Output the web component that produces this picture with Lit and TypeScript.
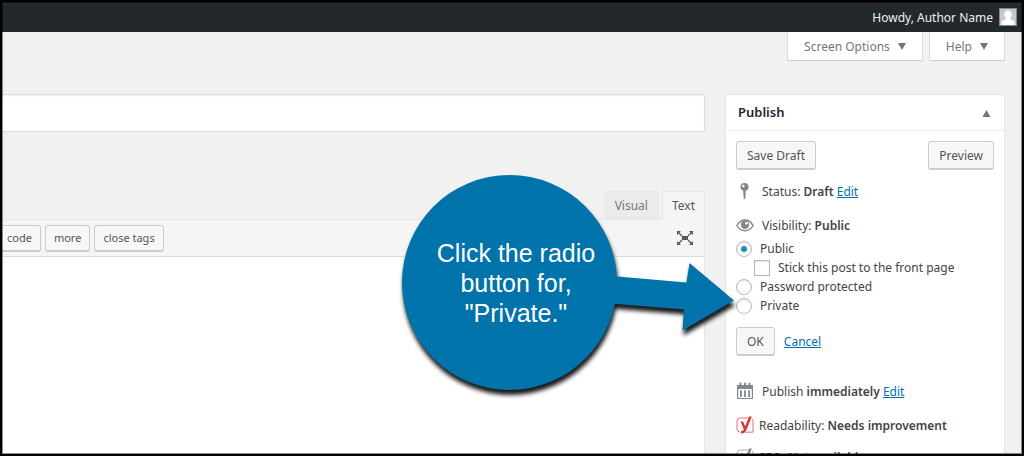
import { LitElement, html, css, svg } from "lit";
import { customElement, state } from "lit/decorators.js";

const YOAST = svg`
  <path d="M12 2H4.500Q1 2 1 5.500v7Q1 16 4 16.200M9 16.200h8V5.500Q17 4 16 3" fill="none" stroke="currentColor" stroke-width="1" opacity=".7"/>
  <path d="M4.500 5.500h2.600l2.100 5L13 .5h2.800L10.600 13.500C9.700 15.900 8.400 17.400 5 17.500v-2.200c1.700-.2 2.500-.9 2.800-2.100z" fill="currentColor"/>`;

@customElement("publish-box")
export class PublishBox extends LitElement {
  static styles = css`
    :host {
      display: block;
      background: #fff;
      border: 1px solid #e5e5e5;
      color: #444;
    }
    .head {
      display: flex;
      align-items: center;
      justify-content: space-between;
      height: 35px;
      padding: 0 13px 0 12px;
      border-bottom: 1px solid #eee;
    }
    .title {
      margin: 0;
      font-size: 13px;
      font-weight: 600;
      color: #23282d;
    }
    .toggle {
      display: flex;
      padding: 2px 0 0;
      border: 0;
      background: none;
    }
    .body {
      padding: 10px 10px 0;
    }
    .actions {
      display: flex;
      justify-content: space-between;
      margin-bottom: 7px;
    }
    .btn {
      height: 29px;
      padding: 0 10px;
      border: 1px solid #ccc;
      border-bottom-width: 2px;
      border-radius: 3px;
      background: #f7f7f7;
      color: #555;
      font: inherit;
    }
    .row {
      display: flex;
      align-items: center;
      gap: 8px;
      height: 28px;
      margin-bottom: 6px;
      white-space: nowrap;
    }
    .tight {
      gap: 5px;
      margin-bottom: 4px;
    }
    .icon {
      flex: none;
      width: 18px;
      height: 18px;
      color: #82878c;
    }
    .red {
      color: #dc3232;
    }
    b {
      font-weight: 600;
    }
    a {
      color: #0073aa;
    }
    .open {
      margin-bottom: 0;
    }
    .choices {
      margin: 0 0 12px;
      padding: 0;
      border: 0;
    }
    .choice {
      display: flex;
      align-items: center;
      gap: 8px;
      height: 19px;
    }
    .nested {
      padding-left: 18px;
    }
    .mark {
      appearance: none;
      display: grid;
      place-items: center;
      width: 16px;
      height: 16px;
      margin: 0;
      border: 1px solid #b4b9be;
      background: #fff;
      box-shadow: inset 0 1px 2px rgba(0, 0, 0, 0.1);
    }
    .round {
      border-radius: 50%;
    }
    .round:checked::before {
      content: "";
      width: 6px;
      height: 6px;
      border-radius: 50%;
      background: #1e8cbe;
    }
    .square:checked::before {
      content: "";
      width: 8px;
      height: 8px;
      background: #1e8cbe;
    }
    .confirm {
      display: flex;
      align-items: center;
      gap: 9px;
      margin-bottom: 21px;
    }
  `;

  @state() visibility = "Public";

  private choice(name: string) {
    return html`<label class="choice">
      <input
        class="mark round"
        type="radio"
        name="visibility"
        .checked=${this.visibility === name}
        @change=${() => (this.visibility = name)}
      />${name}
    </label>`;
  }

  render() {
    return html`
      <div class="head">
        <h2 class="title">Publish</h2>
        <button class="toggle" aria-label="Toggle panel">
          <svg width="9" height="7"><path d="M4.500 0 8.500 7H.5z" fill="#72777c" /></svg>
        </button>
      </div>
      <div class="body">
        <div class="actions">
          <button class="btn">Save Draft</button>
          <button class="btn">Preview</button>
        </div>
        <div class="row">
          <svg class="icon" viewBox="0 0 18 18">
            <path fill="currentColor" d="M8.500 1a4 4 0 0 1 1.300 7.800L9.300 17H7.700L7.200 8.800A4 4 0 0 1 8.500 1z" />
            <circle cx="7.300" cy="4" r="1.300" fill="#fff" />
          </svg>
          <span>Status: <b>Draft</b> <a href="#status">Edit</a></span>
        </div>
        <div class="row open">
          <svg class="icon" viewBox="0 0 18 18">
            <path
              d="M.8 9.500C3 5.800 5.800 4 9 4s6 1.800 8.200 5.500C15 13 12.200 14.700 9 14.700S3 13 .8 9.500z"
              fill="#fff"
              stroke="currentColor"
              stroke-width="1.400"
            />
            <circle cx="9" cy="8.800" r="4.200" fill="currentColor" />
            <circle cx="10.400" cy="7.300" r="1.400" fill="#fff" />
          </svg>
          <span>Visibility: <b>Public</b></span>
        </div>
        <fieldset class="choices" aria-label="Visibility">
          ${this.choice("Public")}
          <label class="choice nested">
            <input class="mark square" type="checkbox" />Stick this post to the front page
          </label>
          ${this.choice("Password protected")} ${this.choice("Private")}
        </fieldset>
        <div class="confirm">
          <button class="btn">OK</button>
          <a href="#cancel">Cancel</a>
        </div>
        <div class="row">
          <svg class="icon" viewBox="0 0 18 18">
            <path
              fill="currentColor"
              fill-rule="evenodd"
              d="M1 3h2.500V1.500a1 1 0 0 1 2 0V3H8V1.500a1 1 0 0 1 2 0V3h2.500V1.500a1 1 0 0 1 2 0V3H17v14H1zM2.200 7v9h13.600V7zM4 8.200h1.800V15H4zM8.100 8.200h1.800V15H8.100zM12.200 8.200H14V15h-1.800z"
            />
          </svg>
          <span>Publish <b>immediately</b> <a href="#date">Edit</a></span>
        </div>
        <div class="row tight">
          <svg class="icon red" viewBox="0 0 18 18">${YOAST}</svg>
          <span>Readability: <b>Needs improvement</b></span>
        </div>
        <div class="row tight">
          <svg class="icon" viewBox="0 0 18 18">${YOAST}</svg>
          <span>SEO: <b>Not available</b></span>
        </div>
      </div>
    `;
  }
}

@customElement("callout-arrow")
export class CalloutArrow extends LitElement {
  static styles = css`
    :host {
      display: block;
      width: 332px;
      height: 216px;
    }
    .shape {
      position: absolute;
      inset: 0;
      overflow: visible;
      filter: drop-shadow(1px 5px 2px rgba(0, 0, 0, 0.9));
    }
    .text {
      position: absolute;
      top: 63px;
      left: 14px;
      width: 200px;
      margin: 0;
      color: #fff;
      font: 25px/30px "Liberation Sans", Arial, sans-serif;
      text-align: center;
    }
  `;

  render() {
    return html`
      <svg class="shape" width="332" height="216" viewBox="0 0 332 216" fill="#0073aa">
        <circle cx="107.500" cy="107.500" r="107.500" />
        <path d="M210 101 284.500 107.500 287.500 88 332 125.500 280.500 155.500 282 134.500 208 128.500z" />
      </svg>
      <p class="text">Click the radio<br />button for,<br />"Private."</p>
    `;
  }
}

@customElement("app-root")
export class AppRoot extends LitElement {
  static styles = css`
    :host {
      display: block;
      font: 12px/19px "Noto Sans", "Segoe UI", sans-serif;
      color: #444;
    }
    .frame {
      position: relative;
      box-sizing: border-box;
      height: 100vh;
      border: 2px solid #000;
      background: #f1f1f1;
      overflow: hidden;
    }
    .frame::after {
      content: "";
      position: absolute;
      inset: 0;
      box-shadow: inset 0 0 0 1px rgba(0, 0, 0, 0.45);
      pointer-events: none;
    }
    .bar {
      display: flex;
      align-items: center;
      justify-content: flex-end;
      gap: 6px;
      height: 30px;
      padding-right: 5px;
      background: #23282d;
      color: #eee;
    }
    .links {
      display: flex;
      justify-content: flex-end;
      gap: 6px;
      padding-right: 17px;
      margin-bottom: 33px;
    }
    .link {
      display: flex;
      align-items: center;
      gap: 8px;
      height: 29px;
      padding: 0 16px;
      border: 1px solid #ddd;
      border-top: 0;
      border-bottom-color: #ccc;
      background: #fff;
      color: #72777c;
      font: inherit;
    }
    .columns {
      display: flex;
      align-items: flex-start;
      gap: 20px;
      padding-right: 17px;
    }
    .main {
      flex: 1;
      min-width: 0;
    }
    .side {
      flex: none;
      width: 280px;
      box-sizing: border-box;
    }
    .name {
      display: block;
      box-sizing: border-box;
      width: 100%;
      height: 38px;
      padding: 3px 8px;
      border: 1px solid #ddd;
      border-left: 0;
      background: #fff;
      box-shadow: inset 0 1px 2px rgba(0, 0, 0, 0.07);
      font: inherit;
    }
    .tabs {
      display: flex;
      justify-content: flex-end;
      gap: 4px;
      margin-top: 59px;
    }
    .tab {
      height: 28px;
      padding: 0 9px;
      border: 1px solid #e5e5e5;
      border-bottom: 0;
      background: #ebebeb;
      color: #777;
      font: inherit;
    }
    .current {
      height: 29px;
      margin-bottom: -1px;
      padding-bottom: 1px;
      background: #f5f5f5;
      color: #555;
      z-index: 1;
    }
    .editor {
      border: 1px solid #e5e5e5;
      border-left: 0;
      background: #fff;
    }
    .tools {
      display: flex;
      align-items: center;
      gap: 4px;
      height: 36px;
      margin-left: -4px;
      padding-right: 10px;
      border-bottom: 1px solid #ddd;
      background: #f5f5f5;
    }
    .tool {
      height: 27px;
      padding: 0 8px;
      border: 1px solid #ccc;
      border-bottom-width: 2px;
      border-radius: 3px;
      background: #f7f7f7;
      color: #555;
      font: inherit;
      font-size: 11px;
    }
    .full {
      display: flex;
      margin-left: auto;
      padding: 0;
      border: 0;
      background: none;
    }
    .area {
      display: block;
      box-sizing: border-box;
      width: 100%;
      height: 260px;
      padding: 10px;
      border: 0;
      resize: none;
      outline: 0;
    }
    .callout {
      position: absolute;
      top: 173px;
      right: 288px;
    }
  `;

  render() {
    const caret = html`<svg width="8" height="7"><path d="M0 0h8L4 7z" fill="#72777c" /></svg>`;
    return html`
      <div class="frame">
        <header class="bar">
          <span>Howdy, Author Name</span>
          <svg width="18" height="18">
            <rect x=".5" y=".5" width="17" height="17" fill="#c8c8c8" stroke="#82878c" />
            <path
              d="M9 2.500c2.300 0 3.700 1.700 3.700 4 0 1.600-.7 3-1.700 3.800v1c2.300.6 4 1.500 4.300 3.200L15.500 17h-13l.2-2.500c.3-1.700 2-2.600 4.300-3.200v-1C6 9.500 5.300 8.100 5.300 6.500c0-2.300 1.400-4 3.700-4z"
              fill="#fff"
            />
          </svg>
        </header>
        <nav class="links">
          <button class="link">Screen Options ${caret}</button>
          <button class="link">Help ${caret}</button>
        </nav>
        <div class="columns">
          <main class="main">
            <input class="name" type="text" aria-label="Title" />
            <div class="tabs">
              <button class="tab">Visual</button>
              <button class="tab current">Text</button>
            </div>
            <div class="editor">
              <div class="tools">
                <button class="tool">code</button>
                <button class="tool">more</button>
                <button class="tool">close tags</button>
                <button class="full" aria-label="Fullscreen">
                  <svg width="18" height="16" viewBox="0 0 18 16">
                    <g fill="#50575e">
                      <path d="M6 6h6v4H6z" />
                      <path d="M1 1h4L1 5zM17 1h-4l4 4zM1 15h4l-4-4zM17 15h-4l4-4z" />
                    </g>
                    <path d="M2 2l4 4M16 2l-4 4M2 14l4-4M16 14l-4-4" stroke="#50575e" stroke-width="1.200" />
                  </svg>
                </button>
              </div>
              <textarea class="area" aria-label="Content"></textarea>
            </div>
          </main>
          <publish-box class="side"></publish-box>
        </div>
        <callout-arrow class="callout"></callout-arrow>
      </div>
    `;
  }
}
